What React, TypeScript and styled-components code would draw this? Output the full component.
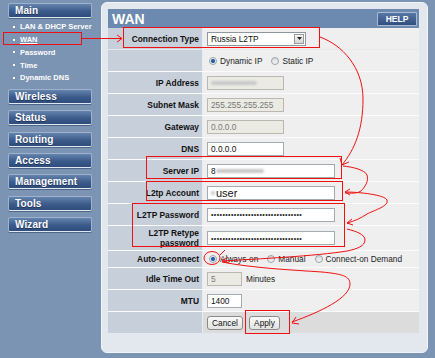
import React from 'react';
import styled, { createGlobalStyle } from 'styled-components';

const GlobalStyle = createGlobalStyle`
  html, body {
    margin: 0;
    padding: 0;
    background: #7b94b4;
    font-family: 'Liberation Sans', Arial, sans-serif;
  }
`;

const subItems = ['LAN & DHCP Server', 'WAN', 'Password', 'Time', 'Dynamic DNS'];
const sections = ['Wireless', 'Status', 'Routing', 'Access', 'Management', 'Tools', 'Wizard'];
const dots = '•'.repeat(32);

export default function App() {
  return (
    <Page>
      <GlobalStyle />
      <Sidebar>
        <NavButton>Main</NavButton>
        <SubMenu>
          {subItems.map((item) => (
            <SubItem key={item} $active={item === 'WAN'}>
              <Bullet />
              {item}
            </SubItem>
          ))}
        </SubMenu>
        {sections.map((s) => (
          <NavButton key={s}>{s}</NavButton>
        ))}
      </Sidebar>

      <Panel>
        <Header>
          <Title>WAN</Title>
          <HelpButton>HELP</HelpButton>
        </Header>

        <Form>
          <Row $h={21} $first>
            <Label>Connection Type</Label>
            <Value>
              <Select>
                <span>Russia L2TP</span>
                <SelectArrow>
                  <svg width="5" height="3" viewBox="0 0 5 3">
                    <path d="M0 0h5L2.5 3z" fill="#222" />
                  </svg>
                </SelectArrow>
              </Select>
            </Value>
          </Row>
          <Row $h={22} $noLine>
            <Label />
            <Value>
              <Radio $checked />
              <RadioText>Dynamic IP</RadioText>
              <Radio />
              <RadioText>Static IP</RadioText>
            </Value>
          </Row>
          <Row $h={22}>
            <Label>IP Address</Label>
            <Value>
              <Input $w={77} $disabled>
                <Blur $w={46} />
              </Input>
            </Value>
          </Row>
          <Row $h={22}>
            <Label>Subnet Mask</Label>
            <Value>
              <Input $w={77} $disabled>255.255.255.255</Input>
            </Value>
          </Row>
          <Row $h={22}>
            <Label>Gateway</Label>
            <Value>
              <Input $w={77} $disabled>0.0.0.0</Input>
            </Value>
          </Row>
          <Row $h={22}>
            <Label>DNS</Label>
            <Value>
              <Input $w={77}>0.0.0.0</Input>
            </Value>
          </Row>
          <Row $h={22}>
            <Label>Server IP</Label>
            <Value>
              <Input $w={128}>
                8<Blur $w={48} />
              </Input>
            </Value>
          </Row>
          <Row $h={22}>
            <Label>L2tp Account</Label>
            <Value>
              <Input $w={128} $big>
                <Blur $w={4} />
                user
              </Input>
            </Value>
          </Row>
          <Row $h={22}>
            <Label>L2TP Password</Label>
            <Value>
              <Input $w={128}>
                <Dots>{dots}</Dots>
              </Input>
            </Value>
          </Row>
          <Row $h={25}>
            <Label>
              L2TP Retype
              <br />
              password
            </Label>
            <Value>
              <Input $w={128}>
                <Dots>{dots}</Dots>
              </Input>
            </Value>
          </Row>
          <Row $h={17}>
            <Label>Auto-reconnect</Label>
            <Value>
              <Radio $checked />
              <RadioText>Always-on</RadioText>
              <Radio />
              <RadioText>Manual</RadioText>
              <Radio />
              <RadioText>Connect-on Demand</RadioText>
            </Value>
          </Row>
          <Row $h={22}>
            <Label>Idle Time Out</Label>
            <Value>
              <Input $w={35} $disabled>5</Input>
              <Unit>Minutes</Unit>
            </Value>
          </Row>
          <Row $h={22}>
            <Label>MTU</Label>
            <Value>
              <Input $w={35}>1400</Input>
            </Value>
          </Row>
          <Row $h={22} $buttons>
            <Label />
            <Value>
              <FormButton $w={36}>Cancel</FormButton>
              <FormButton $w={31}>Apply</FormButton>
            </Value>
          </Row>
        </Form>
      </Panel>

      <Annotations width="435" height="358" viewBox="0 0 435 358">
        <g fill="none" stroke="#f01010" strokeWidth="1">
          <rect x="3.5" y="32.5" width="78" height="12" />
          <path d="M82 38.5H122M117 35l5 3.5-5 3.5" />
          <rect x="123.5" y="27.5" width="196" height="20" />
          <path d="M320 37c22 8 43 30 43 62 0 30-8 50-21 66M340 158l2 7 7-3" />
          <rect x="146.5" y="156.5" width="195" height="22" />
          <path d="M343 166c10 1 22 4 24 9 2 6-2 12-6 16-5 3-10 2-16 2M350 189l-5 3 5 3" />
          <rect x="146.5" y="181.5" width="196" height="19" />
          <path d="M345 192c15 0 40 3 42 8 2 6-12 10-20 14-6 4-12 7-20 9M352 219l-5 4 6 2" />
          <rect x="132.5" y="203.5" width="212" height="43" />
          <path d="M347 229c8 2 18 5 18 11 0 6-8 9-18 11-30 5-90 8-125 10M228 257l-6 4 7 2" />
          <path d="M225 250l-5 5" />
          <ellipse cx="212" cy="258" rx="8" ry="6.5" />
          <path d="M222 262c30 6 70 8 100 10 20 2 28 4 28 12 0 14-30 28-58 38M296 317l-4 6 7 1" />
          <rect x="245.5" y="310.5" width="44" height="23" />
        </g>
      </Annotations>
    </Page>
  );
}

const Page = styled.div`
  position: relative;
  display: flex;
  align-items: flex-start;
  width: 435px;
  height: 358px;
  overflow: hidden;
  background: #7b94b4;
`;

const Sidebar = styled.nav`
  width: 84px;
  padding: 3px 0 0 8px;
  margin-right: 9px;
  display: flex;
  flex-direction: column;
  gap: 6.4px;
`;

const NavButton = styled.div`
  height: 15px;
  box-sizing: border-box;
  padding-left: 6px;
  display: flex;
  align-items: center;
  color: #fff;
  font-weight: bold;
  font-size: 10px;
  letter-spacing: 0.1px;
  text-shadow: 0 1px 0 #1d3358;
  background: linear-gradient(#6483ad, #3d5b8a 55%, #2e4c7c);
  border: 1px solid #9fb2cb;
  border-bottom: 1px solid #e2e8f0;
  border-radius: 2px;
  box-shadow: 0 1px 0 #4d6688;
`;

const SubMenu = styled.ul`
  list-style: none;
  margin: -3.8px 0 -1.5px;
  padding: 0;
  display: flex;
  flex-direction: column;
`;

const SubItem = styled.li<{ $active?: boolean }>`
  height: 12.7px;
  display: flex;
  align-items: center;
  padding-left: 5px;
  font-size: 7.5px;
  font-weight: bold;
  color: #fff;
  text-decoration: ${(p) => (p.$active ? 'underline' : 'none')};
  white-space: nowrap;
`;

const Bullet = styled.span`
  width: 2px;
  height: 2px;
  background: #fff;
  margin-right: 5px;
  flex-shrink: 0;
`;

const Panel = styled.section`
  margin-top: 2px;
  width: 327px;
  height: 351px;
  box-sizing: border-box;
  padding: 6px 8px 0 6px;
  background: #e3e8ef;
  border: 1px solid #f3f5f8;
  border-radius: 6px;
`;

const Header = styled.div`
  height: 19px;
  display: flex;
  align-items: center;
  justify-content: space-between;
  padding: 0 2px 0 4px;
  background: #6c89b0;
`;

const Title = styled.h1`
  margin: 0;
  color: #fff;
  font-size: 14px;
  font-weight: bold;
`;

const HelpButton = styled.div`
  width: 40px;
  height: 14px;
  box-sizing: border-box;
  display: flex;
  align-items: center;
  justify-content: center;
  color: #fff;
  font-size: 8.5px;
  font-weight: bold;
  background: linear-gradient(#5877a3, #304f80);
  border: 1px solid #a9bbd2;
  border-radius: 1px;
`;

const Form = styled.div`
  display: flex;
  flex-direction: column;
`;

const Row = styled.div<{ $h: number; $first?: boolean; $noLine?: boolean; $buttons?: boolean }>`
  display: grid;
  grid-template-columns: 95px 1fr;
  height: ${(p) => p.$h}px;
  box-sizing: border-box;
  border-top: ${(p) => (p.$first ? 'none' : p.$noLine ? '1px solid #e9e9e9' : '1px solid #fbfbfb')};
  & > div:last-child {
    background: ${(p) => (p.$buttons ? '#dcdcdc' : '#efefef')};
  }
`;

const Label = styled.div`
  display: flex;
  align-items: center;
  justify-content: flex-end;
  text-align: right;
  padding-right: 3px;
  background: #c7cfdb;
  border-right: 1px solid #e9ecf0;
  color: #111;
  font-size: 8.4px;
  font-weight: bold;
  line-height: 10px;
`;

const Value = styled.div`
  display: flex;
  align-items: center;
  padding-left: 4px;
  font-size: 8.3px;
  color: #222;
  white-space: nowrap;
`;

const Select = styled.div`
  width: 99px;
  height: 14px;
  box-sizing: border-box;
  display: flex;
  align-items: center;
  justify-content: space-between;
  padding-left: 3px;
  background: #fff;
  border: 1px solid #8f979e;
  font-size: 8.3px;
  color: #111;
`;

const SelectArrow = styled.span`
  width: 10px;
  height: 10px;
  margin-right: 1px;
  box-sizing: border-box;
  display: flex;
  align-items: center;
  justify-content: center;
  background: linear-gradient(#f6f6f6, #d6d6d6);
  border: 1px solid #9a9a9a;
`;

const Input = styled.div<{ $w: number; $disabled?: boolean; $big?: boolean }>`
  width: ${(p) => p.$w}px;
  height: 14px;
  box-sizing: border-box;
  display: flex;
  align-items: center;
  padding-left: 3px;
  background: ${(p) => (p.$disabled ? '#ebebe4' : '#fff')};
  border: 1px solid ${(p) => (p.$disabled ? '#b9b9b2' : '#a3aab0')};
  color: ${(p) => (p.$disabled ? '#777' : '#111')};
  font-size: ${(p) => (p.$big ? '11px' : '8.3px')};
  overflow: hidden;
  white-space: nowrap;
`;

const Blur = styled.span<{ $w: number }>`
  display: inline-block;
  width: ${(p) => p.$w}px;
  height: 4px;
  margin-right: 1px;
  background: #c8c8c8;
  border-radius: 2px;
  filter: blur(1px);
`;

const Dots = styled.span`
  font-size: 7px;
  letter-spacing: 0.4px;
  color: #222;
`;

const Radio = styled.span<{ $checked?: boolean }>`
  width: 8px;
  height: 8px;
  margin: 0 3px 0 2px;
  flex-shrink: 0;
  box-sizing: border-box;
  border-radius: 50%;
  border: 1px solid #9aa3ab;
  background: ${(p) =>
    p.$checked
      ? 'radial-gradient(circle, #2d5fa8 0 1.8px, #e8eef5 2.3px)'
      : 'linear-gradient(#d8dbde, #f4f4f4)'};
`;

const RadioText = styled.span`
  margin-right: 7px;
  font-size: 8.3px;
  color: #222;
  white-space: nowrap;
`;

const Unit = styled.span`
  margin-left: 4px;
  font-size: 8.3px;
  color: #222;
`;

const FormButton = styled.div<{ $w: number }>`
  width: ${(p) => p.$w}px;
  height: 14px;
  margin-right: 6px;
  box-sizing: border-box;
  display: flex;
  align-items: center;
  justify-content: center;
  font-size: 8.3px;
  color: #111;
  background: linear-gradient(#fafafa, #e2e2e2);
  border: 1px solid #8a8a8a;
  border-radius: 3px;
`;

const Annotations = styled.svg`
  position: absolute;
  top: 0;
  left: 0;
  pointer-events: none;
`;
